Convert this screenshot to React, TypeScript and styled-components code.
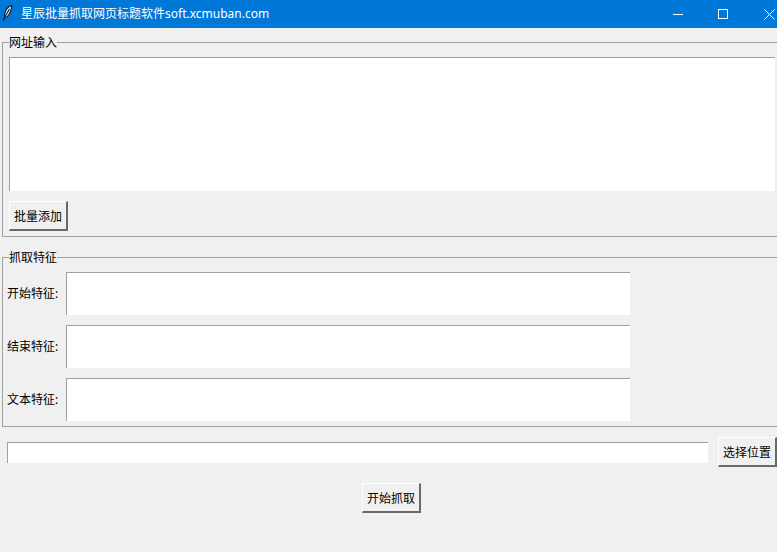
import { FunctionComponent } from "react";
import styled, { createGlobalStyle } from "styled-components";

const FONT = `"Noto Sans", "Noto Sans CJK SC", sans-serif`;

const GlobalStyle = createGlobalStyle`
  html, body {
    margin: 0;
    padding: 0;
    background: #f0f0f0;
  }
  * {
    box-sizing: border-box;
  }
`;

const FeatherIcon = () => (
  <svg width="16" height="18" viewBox="0 0 16 18">
    <path d="M11.8 0.5C8 1.5 5 5.5 4.5 10.5L5 12.5L7.5 11.5C10 8.5 11.5 5 11.8 0.5Z" fill="#e6edf5" stroke="#0a2540" strokeWidth="1.2" />
    <path d="M9.5 4L4.5 12.5L3.5 16" stroke="#0a2540" strokeWidth="1.2" fill="none" />
  </svg>
);

const MinimizeIcon = () => (
  <svg width="10" height="10" viewBox="0 0 10 10">
    <path d="M0 5.5H10" stroke="#fff" strokeWidth="1" />
  </svg>
);

const MaximizeIcon = () => (
  <svg width="10" height="10" viewBox="0 0 10 10">
    <rect x="0.5" y="0.5" width="9" height="9" fill="none" stroke="#fff" strokeWidth="1" />
  </svg>
);

const CloseIcon = () => (
  <svg width="11" height="11" viewBox="0 0 11 11">
    <path d="M0.5 0.5L10.5 10.5M10.5 0.5L0.5 10.5" stroke="#fff" strokeWidth="1" />
  </svg>
);

interface FeatureRowProps {
  label: string;
}

const FeatureRow: FunctionComponent<FeatureRowProps> = ({ label }) => (
  <Row>
    <RowLabel>{label}</RowLabel>
    <FeatureInput />
  </Row>
);

const App = () => {
  return (
    <Window>
      <GlobalStyle />
      <TitleBar>
        <TitleLeft>
          <FeatherIcon />
          <TitleText>星辰批量抓取网页标题软件soft.xcmuban.com</TitleText>
        </TitleLeft>
        <WindowButtons>
          <WindowButton>
            <MinimizeIcon />
          </WindowButton>
          <WindowButton>
            <MaximizeIcon />
          </WindowButton>
          <CloseButton>
            <CloseIcon />
          </CloseButton>
        </WindowButtons>
      </TitleBar>
      <Content>
        <UrlGroup>
          <GroupLegend>网址输入</GroupLegend>
          <UrlInput />
          <TkButton>批量添加</TkButton>
        </UrlGroup>
        <FeatureGroup>
          <GroupLegend>抓取特征</GroupLegend>
          <FeatureRow label="开始特征:" />
          <FeatureRow label="结束特征:" />
          <FeatureRow label="文本特征:" />
        </FeatureGroup>
        <PathRow>
          <PathInput />
          <TkButton>选择位置</TkButton>
        </PathRow>
        <StartRow>
          <TkButton>开始抓取</TkButton>
        </StartRow>
      </Content>
    </Window>
  );
};

const Window = styled.div`
  width: 777px;
  height: 552px;
  overflow: hidden;
  display: flex;
  flex-direction: column;
  background: #f0f0f0;
  font-family: ${FONT};
  font-size: 12px;
  color: #000;
`;

const TitleBar = styled.div`
  height: 28px;
  flex: none;
  display: flex;
  align-items: center;
  justify-content: space-between;
  background: #0078d7;
`;

const TitleLeft = styled.div`
  display: flex;
  align-items: center;
  gap: 5px;
`;

const TitleText = styled.span`
  font-size: 12px;
  line-height: 16px;
  color: #fff;
`;

const WindowButtons = styled.div`
  display: flex;
  height: 100%;
  margin-right: -16px;
`;

const WindowButton = styled.div`
  width: 45px;
  height: 100%;
  display: flex;
  align-items: center;
  justify-content: center;
`;

const CloseButton = styled(WindowButton)`
  width: 48px;
`;

const Content = styled.div`
  flex: 1;
  display: flex;
  flex-direction: column;
  padding: 8px 0 0 2px;
`;

const Group = styled.fieldset`
  margin: 0 -4px 0 0;
  min-width: 0;
  padding: 0;
  border: 1px solid #a0a0a0;
`;

const GroupLegend = styled.legend`
  padding: 0;
  margin-left: 6px;
  font-size: 12px;
  line-height: 13px;
  height: 13px;
`;

const UrlGroup = styled(Group)`
  height: 201px;
  padding: 8px 0 0 6px;

  ${GroupLegend} {
    margin-left: 0;
  }
`;

const UrlInput = styled.div`
  width: 766px;
  height: 134px;
  background: #fff;
  border-top: 1px solid #a0a0a0;
  border-left: 1px solid #a0a0a0;
  margin-bottom: 10px;
`;

const TkButton = styled.button`
  width: 59px;
  height: 30px;
  padding: 0;
  flex: none;
  display: block;
  background: #f0f0f0;
  border-style: solid;
  border-width: 1px 2px 2px 1px;
  border-color: #fff #696969 #696969 #fff;
  font-family: ${FONT};
  font-size: 12px;
  color: #000;
`;

const FeatureGroup = styled(Group)`
  margin-top: 14px;
  height: 176px;
  padding: 8px 0 0 4px;

  ${GroupLegend} {
    margin-left: 2px;
  }
`;

const Row = styled.div`
  display: flex;
  align-items: center;
  height: 43px;
  margin-bottom: 10px;
`;

const RowLabel = styled.span`
  width: 59px;
  flex: none;
  line-height: 16px;
`;

const FeatureInput = styled.div`
  width: 564px;
  height: 43px;
  background: #fff;
  border-top: 1px solid #a0a0a0;
  border-left: 1px solid #a0a0a0;
`;

const PathRow = styled.div`
  display: flex;
  align-items: center;
  gap: 10px;
  margin-top: 10px;
  padding-left: 5px;
`;

const PathInput = styled.div`
  width: 701px;
  height: 21px;
  background: #fff;
  border-top: 1px solid #a0a0a0;
  border-left: 1px solid #a0a0a0;
`;

const StartRow = styled.div`
  display: flex;
  margin-top: 16px;
  padding-left: 360px;
`;

export default App;
